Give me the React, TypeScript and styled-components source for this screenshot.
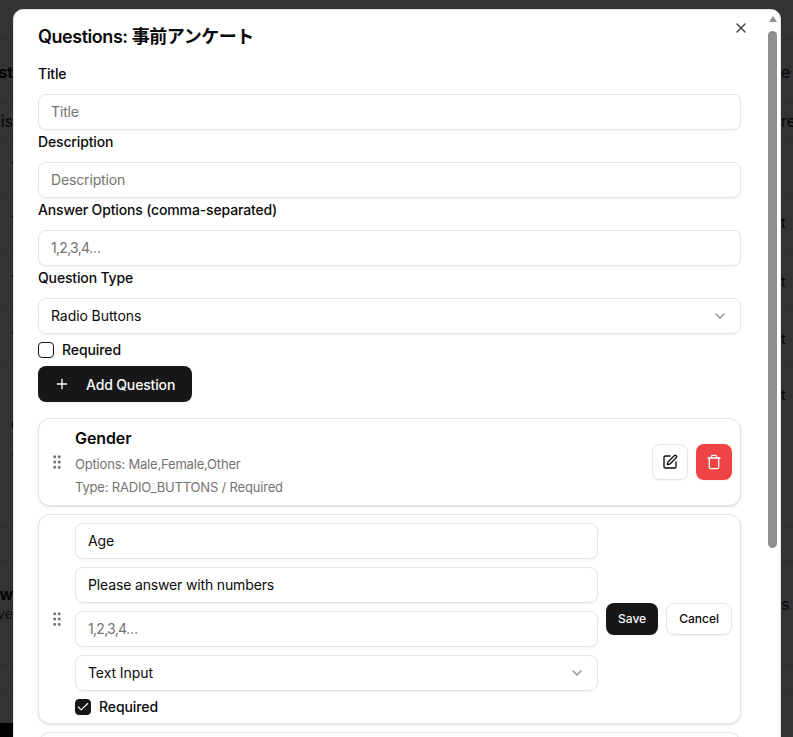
import React from "react";
import styled, { createGlobalStyle } from "styled-components";
import { Plus, GripVertical, SquarePen, Trash, X, ChevronDown, Check } from "lucide-react";

const Global = createGlobalStyle`
  html, body { margin: 0; height: 100%; overflow: hidden; background: #fff; }
  body { font-family: Inter, "Noto Sans CJK JP", sans-serif; color: #0a0a0a; }
  * { box-sizing: border-box; }
`;

const Page = styled.div`
  height: 737px;
  display: flex;
  flex-direction: column;
  overflow: hidden;
`;
const BgRow = styled.div<{ $h: number; $line?: boolean }>`
  height: ${(p) => p.$h}px;
  flex: none;
  display: flex;
  align-items: center;
  justify-content: space-between;
  font-size: 14px;
  border-bottom: ${(p) => (p.$line ? "1px solid #e5e5e5" : "none")};
`;
const BgLeft = styled.div<{ $bold?: boolean; $size?: number; $color?: string }>`
  width: 13px;
  overflow: hidden;
  white-space: nowrap;
  display: flex;
  flex-direction: column;
  align-items: flex-end;
  font-size: ${(p) => p.$size ?? 14}px;
  font-weight: ${(p) => (p.$bold ? 700 : 400)};
  color: ${(p) => p.$color ?? "#0a0a0a"};
`;
const BgSub = styled.span`
  font-size: 14px;
  font-weight: 400;
  line-height: 20px;
  color: #525252;
`;
const BgMark = styled.div`
  width: 13px;
  padding-left: 11px;
  overflow: hidden;
  white-space: nowrap;
  font-size: 14px;
  line-height: 14px;
  color: #0a0a0a;
`;
const BgRight = styled.div<{ $size?: number; $color?: string }>`
  width: 12px;
  overflow: hidden;
  white-space: nowrap;
  font-size: ${(p) => p.$size ?? 14}px;
  color: ${(p) => p.$color ?? "#0a0a0a"};
`;
const BgFooter = styled.div`
  margin-top: auto;
  height: 14px;
  width: 13px;
  flex: none;
  background: #0a0a0a;
`;
const Backdrop = styled.div`
  position: fixed;
  inset: 0;
  background: rgba(0, 0, 0, 0.8);
`;
const Modal = styled.div`
  position: fixed;
  left: 13px;
  top: 9px;
  width: 768px;
  height: 760px;
  background: #fff;
  border: 1px solid #e5e5e5;
  border-radius: 10px;
  overflow: hidden;
  padding: 13px 39px 0 24px;
  display: flex;
  flex-direction: column;
  & > * { flex-shrink: 0; }
`;
const Title = styled.h2`
  margin: 0 0 13px;
  font-size: 18px;
  line-height: 28px;
  font-weight: 600;
  letter-spacing: -0.45px;
`;
const CloseBtn = styled.span`
  position: absolute;
  top: 10px;
  right: 31px;
  color: #404040;
  display: flex;
`;
const Track = styled.div`
  position: absolute;
  top: 0;
  right: 0;
  width: 15px;
  bottom: 0;
  display: flex;
  flex-direction: column;
  align-items: center;
  background: #fff;
  padding: 6px 3px 0 3px;
`;
const Arrow = styled.div`
  width: 0;
  height: 0;
  border-left: 4.5px solid transparent;
  border-right: 4.5px solid transparent;
  border-bottom: 6px solid #8f8f8f;
`;
const Thumb = styled.div`
  width: 9.5px;
  height: 517px;
  margin-top: 9px;
  background: #8f8f8f;
  border-radius: 5px;
`;
const Field = styled.div`
  display: flex;
  flex-direction: column;
  margin-bottom: 2px;
`;
const Label = styled.label`
  font-size: 14px;
  line-height: 20px;
  font-weight: 500;
  letter-spacing: -0.15px;
  margin-bottom: 10px;
`;
const Input = styled.input<{ $tight?: boolean }>`
  width: 100%;
  height: 36px;
  flex: none;
  border: 1px solid #e5e5e5;
  border-radius: 8px;
  padding: 0 12px 1px;
  font: 400 14px Inter, "Noto Sans CJK JP", sans-serif;
  letter-spacing: ${(p) => (p.$tight ? "-0.7px" : "-0.15px")};
  color: #0a0a0a;
  background: #fff;
  box-shadow: 0 1px 2px rgba(0, 0, 0, 0.05);
  outline: none;
  &::placeholder { color: #737373; opacity: 1; }
`;
const Select = styled.div`
  width: 100%;
  height: 36px;
  flex: none;
  border: 1px solid #e5e5e5;
  border-radius: 8px;
  padding: 0 12px 1px;
  font-size: 14px;
  letter-spacing: -0.08px;
  display: flex;
  align-items: center;
  justify-content: space-between;
  box-shadow: 0 1px 2px rgba(0, 0, 0, 0.05);
  svg { color: #737373; opacity: 0.8; }
`;
const CheckRow = styled.div`
  display: flex;
  align-items: center;
  gap: 8px;
  height: 16px;
  font-size: 14px;
  font-weight: 500;
  letter-spacing: -0.1px;
`;
const CheckText = styled.span`
  margin-bottom: 1px;
`;
const Box = styled.span<{ $on?: boolean }>`
  width: 16px;
  height: 16px;
  border-radius: 4px;
  border: 1px solid #171717;
  background: ${(p) => (p.$on ? "#171717" : "#fff")};
  color: #fff;
  display: flex;
  align-items: center;
  justify-content: center;
  box-shadow: 0 1px 2px rgba(0, 0, 0, 0.05);
`;
const RequiredTop = styled(CheckRow)`
  margin: 6px 0 8px;
`;
const AddBtn = styled.button`
  align-self: flex-start;
  height: 36px;
  border: none;
  border-radius: 8px;
  background: #171717;
  color: #fafafa;
  padding: 0 17px 0 16px;
  display: flex;
  align-items: center;
  gap: 16px;
  font: 500 14px Inter, sans-serif;
  letter-spacing: -0.15px;
  margin-bottom: 16px;
  box-shadow: 0 1px 2px rgba(0, 0, 0, 0.05);
`;
const Card = styled.div<{ $h: number }>`
  height: ${(p) => p.$h}px;
  flex: none;
  border: 1px solid #e5e5e5;
  border-radius: 12px;
  box-shadow: 0 1px 3px rgba(0, 0, 0, 0.1), 0 1px 2px -1px rgba(0, 0, 0, 0.1);
  margin-bottom: 8px;
  padding: 0 8px 0 8px;
  display: flex;
  align-items: center;
  gap: 8px;
  background: #fff;
`;
const Grip = styled.span`
  width: 20px;
  flex: none;
  display: flex;
  justify-content: center;
  color: #71717a;
`;
const Info = styled.div`
  flex: 1;
  align-self: stretch;
  padding-top: 8px;
  display: flex;
  flex-direction: column;
`;
const QName = styled.div`
  font-size: 16px;
  line-height: 22px;
  font-weight: 600;
  letter-spacing: -0.1px;
`;
const Meta = styled.div`
  font-size: 13px;
  line-height: 16px;
  color: #737373;
  letter-spacing: -0.18px;
  margin-top: 7px;
`;
const IconBtn = styled.button<{ $danger?: boolean }>`
  width: 36px;
  height: 36px;
  flex: none;
  border-radius: 8px;
  border: ${(p) => (p.$danger ? "none" : "1px solid #e5e5e5")};
  background: ${(p) => (p.$danger ? "#ef4444" : "#fff")};
  color: ${(p) => (p.$danger ? "#fff" : "#0a0a0a")};
  display: flex;
  align-items: center;
  justify-content: center;
  padding: 0;
  box-shadow: 0 1px 2px rgba(0, 0, 0, 0.05);
`;
const EditCol = styled.div`
  flex: 1;
  display: flex;
  flex-direction: column;
  gap: 8px;
`;
const SmallBtn = styled.button<{ $primary?: boolean }>`
  height: 32px;
  flex: none;
  border-radius: 8px;
  border: ${(p) => (p.$primary ? "none" : "1px solid #e5e5e5")};
  background: ${(p) => (p.$primary ? "#171717" : "#fff")};
  color: ${(p) => (p.$primary ? "#fafafa" : "#0a0a0a")};
  padding: 0 12px 1px;
  font: 500 12px Inter, sans-serif;
  box-shadow: 0 1px 2px rgba(0, 0, 0, 0.05);
`;
const Actions = styled.div`
  display: flex;
  gap: 8px;
  flex: none;
`;

type Row = { h: number; l?: string; sub?: string; m?: string; r?: string; line?: boolean; bold?: boolean; rc?: string; size?: number; lc?: string };
const rows: Row[] = [
  { h: 40, line: true },
  { h: 64, l: "Test", r: "e", rc: "#1e1b4b", bold: true, size: 16, line: true },
  { h: 35, l: "Lis", r: "re", rc: "#1e1b4b", lc: "#1e1b4b", size: 16, line: true },
  { h: 58, m: "T", line: true },
  { h: 50, m: "T", r: "t" },
  { h: 6, line: true },
  { h: 57, m: "T", r: "t", line: true },
  { h: 57, m: "T", r: "t", line: true },
  { h: 54, r: "t" },
  { h: 8, m: "C" },
  { h: 42, m: "." },
  { h: 57, line: true },
  { h: 33, line: true },
  { h: 23 },
  { h: 40, l: "Answ", sub: "ve", r: "s", rc: "#1e1b4b", bold: true, size: 16 },
  { h: 41, line: true },
  { h: 30, line: true },
  { h: 28 },
];

export default function App() {
  return (
    <>
      <Global />
      <Page>
        {rows.map((r, i) => (
          <BgRow key={i} $h={r.h} $line={r.line}>
            {r.m ? (
              <BgMark>{r.m}</BgMark>
            ) : (
              <BgLeft $bold={r.bold} $size={r.size} $color={r.lc}>
                {r.l}
                {r.sub && <BgSub>{r.sub}</BgSub>}
              </BgLeft>
            )}
            <BgRight $color={r.rc} $size={r.size}>{r.r}</BgRight>
          </BgRow>
        ))}
        <BgFooter />
      </Page>
      <Backdrop />
      <Modal>
        <Title>Questions: 事前アンケート</Title>
        <CloseBtn><X size={16} /></CloseBtn>
        <Field>
          <Label>Title</Label>
          <Input placeholder="Title" readOnly />
        </Field>
        <Field>
          <Label>Description</Label>
          <Input placeholder="Description" readOnly />
        </Field>
        <Field>
          <Label>Answer Options (comma-separated)</Label>
          <Input $tight placeholder="1,2,3,4…" readOnly />
        </Field>
        <Field>
          <Label>Question Type</Label>
          <Select>Radio Buttons<ChevronDown size={16} /></Select>
        </Field>
        <RequiredTop><Box /><CheckText>Required</CheckText></RequiredTop>
        <AddBtn><Plus size={16} />Add Question</AddBtn>
        <Card $h={88}>
          <Grip><GripVertical size={18} /></Grip>
          <Info>
            <QName>Gender</QName>
            <Meta>Options: Male,Female,Other</Meta>
            <Meta>Type: RADIO_BUTTONS / Required</Meta>
          </Info>
          <IconBtn><SquarePen size={16} /></IconBtn>
          <IconBtn $danger><Trash size={16} /></IconBtn>
        </Card>
        <Card $h={210}>
          <Grip><GripVertical size={18} /></Grip>
          <EditCol>
            <Input value="Age" readOnly />
            <Input value="Please answer with numbers" readOnly />
            <Input $tight placeholder="1,2,3,4…" readOnly />
            <Select>Text Input<ChevronDown size={16} /></Select>
            <CheckRow><Box $on><Check size={14} /></Box><CheckText>Required</CheckText></CheckRow>
          </EditCol>
          <Actions>
            <SmallBtn $primary>Save</SmallBtn>
            <SmallBtn>Cancel</SmallBtn>
          </Actions>
        </Card>
        <Card $h={88} />
        <Track>
          <Arrow />
          <Thumb />
        </Track>
      </Modal>
    </>
  );
}
